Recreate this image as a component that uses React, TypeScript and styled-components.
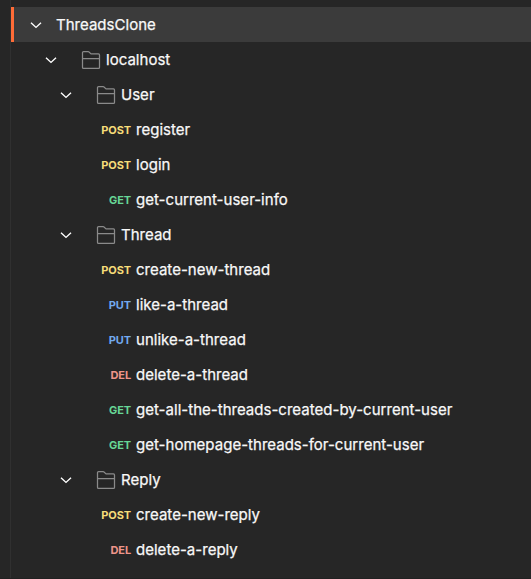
import React from 'react';
import styled, { createGlobalStyle } from 'styled-components';

const GlobalStyle = createGlobalStyle`
  * { box-sizing: border-box; }
  body { margin: 0; background: #262626; }
`;

const Sidebar = styled.div`
  display: flex;
  height: 579px;
  overflow: hidden;
  background: #262626;
  border-bottom: 1px solid #212121;
  color: #f8f8f8;
  font-family: Inter, "Liberation Sans", sans-serif;
  font-size: 15px;
`;

const Gutter = styled.div`
  flex: none;
  width: 11px;
  border-right: 1px solid #303030;
`;

const Tree = styled.div`
  flex: 1;
  min-width: 0;
  padding-top: 7px;
`;

const Row = styled.div<{ $depth: number; $active?: boolean }>`
  display: flex;
  align-items: center;
  height: 35px;
  padding-left: ${(p) => 15 + p.$depth * 15 - (p.$active ? 3 : 0)}px;
  background: ${(p) => (p.$active ? '#3b3b3b' : 'transparent')};
  border-left: ${(p) => (p.$active ? '3px solid #ff6c37' : 'none')};
`;

const Chevron = styled.svg`
  flex: none;
  width: 20px;
  height: 20px;
`;

const FolderIcon = styled.svg`
  flex: none;
  width: 20px;
  height: 20px;
  margin-left: 20px;
`;

const Label = styled.span<{ $gap: number }>`
  margin-left: ${(p) => p.$gap}px;
  line-height: 20px;
  letter-spacing: 0.02px;
  white-space: nowrap;
  -webkit-text-stroke: 0.25px currentColor;
`;

const methodColors = {
  POST: '#f7dd79',
  GET: '#67d696',
  PUT: '#72aaf0',
  DEL: '#ee958a',
};

type Method = keyof typeof methodColors;

const MethodTag = styled.span<{ $method: Method }>`
  flex: none;
  width: 45px;
  margin-left: 30px;
  text-align: right;
  font-size: 11px;
  font-weight: 700;
  letter-spacing: -0.1px;
  line-height: 20px;
  color: ${(p) => methodColors[p.$method]};
`;

type Item = { name: string; depth: number; kind: 'root' | 'folder' | Method };

const items: Item[] = [
  { name: 'ThreadsClone', depth: 0, kind: 'root' },
  { name: 'localhost', depth: 1, kind: 'folder' },
  { name: 'User', depth: 2, kind: 'folder' },
  { name: 'register', depth: 2, kind: 'POST' },
  { name: 'login', depth: 2, kind: 'POST' },
  { name: 'get-current-user-info', depth: 2, kind: 'GET' },
  { name: 'Thread', depth: 2, kind: 'folder' },
  { name: 'create-new-thread', depth: 2, kind: 'POST' },
  { name: 'like-a-thread', depth: 2, kind: 'PUT' },
  { name: 'unlike-a-thread', depth: 2, kind: 'PUT' },
  { name: 'delete-a-thread', depth: 2, kind: 'DEL' },
  { name: 'get-all-the-threads-created-by-current-user', depth: 2, kind: 'GET' },
  { name: 'get-homepage-threads-for-current-user', depth: 2, kind: 'GET' },
  { name: 'Reply', depth: 2, kind: 'folder' },
  { name: 'create-new-reply', depth: 2, kind: 'POST' },
  { name: 'delete-a-reply', depth: 2, kind: 'DEL' },
];

function TreeRow({ item }: { item: Item }) {
  const { name, depth, kind } = item;
  if (kind !== 'root' && kind !== 'folder') {
    return (
      <Row $depth={depth}>
        <MethodTag $method={kind}>{kind}</MethodTag>
        <Label $gap={5}>{name}</Label>
      </Row>
    );
  }
  return (
    <Row $depth={depth} $active={kind === 'root'}>
      <Chevron viewBox="0 0 20 20" fill="none" stroke="#fff" strokeWidth="1.4">
        <path d="M5 7.7 L10 12.4 L15 7.7" />
      </Chevron>
      {kind === 'folder' && (
        <FolderIcon viewBox="0 0 20 20" fill="none" stroke="#8a8a8a" strokeWidth="1.25" strokeLinejoin="round">
          <path d="M1.5 17.4V2.6q0-1 1-1H7.2q.5 0 .8.4l2 1.9h7.5q1 0 1 1v12.5q0 1-1 1H2.5q-1 0-1-1ZM1.5 8.5H18.5" />
        </FolderIcon>
      )}
      <Label $gap={kind === 'root' ? 10 : 5}>{name}</Label>
    </Row>
  );
}

export default function App() {
  return (
    <>
      <GlobalStyle />
      <Sidebar>
        <Gutter />
        <Tree>
          {items.map((item) => (
            <TreeRow key={item.name} item={item} />
          ))}
        </Tree>
      </Sidebar>
    </>
  );
}
